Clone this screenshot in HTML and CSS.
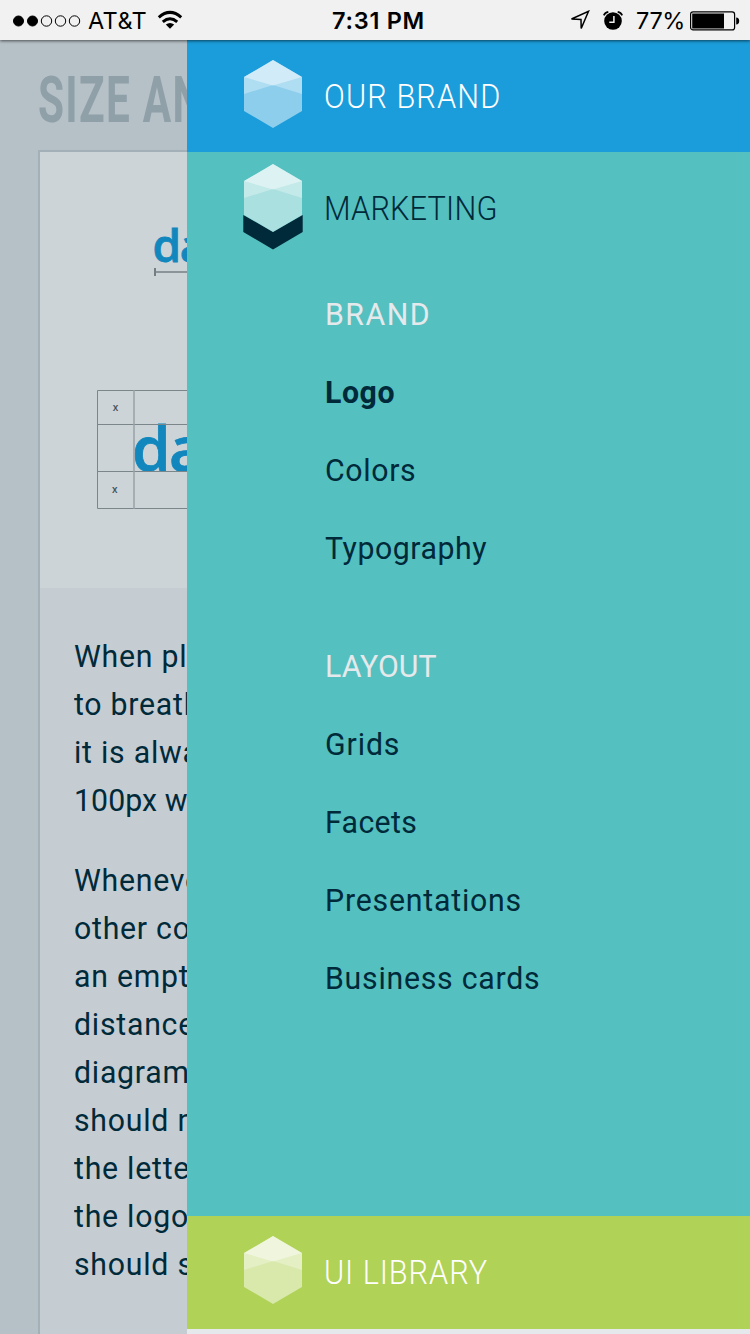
FILE: index.html
```html
<!DOCTYPE html>
<html lang="en">
<head>
<meta charset="utf-8">
<title>Logo</title>
<link rel="stylesheet" href="styles.css">
</head>
<body>
<svg width="0" height="0" class="defs" aria-hidden="true">
  <symbol id="cube" viewBox="0 0 60 86">
    <path d="M1 17 30 0l29 17v34L30 68 1 51z" fill="#fff" fill-opacity=".5"/>
    <path d="M1 17 30 0l29 17v17L30 25 1 34z" fill="#fff" fill-opacity=".3"/>
    <path d="M1 17 30 0l29 17-29 8.500z" fill="#fff" fill-opacity=".43"/>
  </symbol>
</svg>
<header class="status">
  <div class="status-left">
    <svg width="70" height="14" viewBox="0 0 70 14"><g stroke="#000" stroke-width="1"><circle cx="6.500" cy="7" r="5"/><circle cx="20.500" cy="7" r="5"/><g fill="none"><circle cx="34.500" cy="7" r="5.200"/><circle cx="48.500" cy="7" r="5.200"/><circle cx="62.500" cy="7" r="5.200"/></g></g></svg>
    <span class="carrier">AT&amp;T</span>
    <svg class="wifi" width="26" height="20" viewBox="0 0 26 20"><g fill="none" stroke="#000" stroke-width="3"><path d="M1.800 7.300Q13-2.500 24.200 7.300"/><path d="M5.800 11.800Q13 5.800 20.200 11.800"/></g><path d="M8.800 14.600Q13 11.300 17.200 14.600L13 18.800z"/></svg>
  </div>
  <div class="time">7:31 PM</div>
  <div class="status-right">
    <svg width="20" height="21" viewBox="0 0 20 21"><path d="M1.500 9 18.500 1.300 11.200 18.500 11 9.500z" fill="none" stroke="#000" stroke-width="1.500"/></svg>
    <svg class="alarm" width="20" height="19" viewBox="0 0 20 19"><circle cx="10" cy="10" r="8.800"/><path d="M.8 4.400Q2 1.500 5.300.9M19.200 4.400Q18 1.500 14.700.9" fill="none" stroke="#000" stroke-width="1.700"/><path d="M10.900 5v6.200H6.300" fill="none" stroke="#f1f1f1" stroke-width="1.500"/></svg>
    <span class="percent">77%</span>
    <svg class="battery" width="50" height="20" viewBox="0 0 50 20"><rect x=".6" y=".9" width="44" height="18" rx="2.500" fill="none" stroke="#000" stroke-width="1.200"/><path d="M2.200 2.500h31.800v15H2.200zM46.200 6.500q3 .2 3 3.500t-3 3.500z"/></svg>
  </div>
</header>
<div class="screen">
  <main class="page">
    <h1 class="title">SIZE AND</h1>
    <article class="card">
      <svg class="diagram" width="640" height="436" viewBox="40 152 640 436">
        <g fill="none" stroke="#8b9599" stroke-width="2"><path d="M155 272h300"/><path d="M155 268v8" stroke="#737e84"/></g>
        <text class="mark" x="152.500" y="262" font-size="46">datto</text>
        <text class="mark" x="132" y="471" font-size="62">datto</text>
        <g fill="none" stroke="#7b868b" stroke-width="1"><path d="M97.500 390.500h300v118h-300z"/><path d="M97 424.500h300M97 471.500h300"/><path d="M134 390v119" stroke="#98a2a6" stroke-width="1.500"/></g>
        <text class="dim" x="112.800" y="410.500">x</text>
        <text class="dim" x="112" y="493">x</text>
      </svg>
      <div class="copy">
        <p>When placing<br>to breathe,<br>it is always<br><span class="tight">100px wide</span></p>
        <p>Whenever<br>other content<br>an empty<br>distance<br>diagram<br>should not<br>the letter<br>the logo<br>should stay</p>
      </div>
    </article>
  </main>
  <nav class="drawer">
    <a class="head blue"><svg class="cube" width="60" height="86"><use href="#cube"/></svg><span class="our">OUR BRAND</span></a>
    <div class="open">
      <a class="head dark"><svg class="cube raised" width="60" height="86" viewBox="0 0 60 86"><path d="M.3 51 30 68l29.700-17v17L30 85.500.3 68z" fill="#002a3a"/><use href="#cube" width="60" height="86"/></svg><span class="marketing">MARKETING</span></a>
      <ul class="group">
        <li class="label w-brand">BRAND</li>
        <li class="current">Logo</li>
        <li class="w-colors">Colors</li>
        <li class="w-typo">Typography</li>
      </ul>
      <ul class="group">
        <li class="label w-layout">LAYOUT</li>
        <li class="w-grids">Grids</li>
        <li class="w-facets">Facets</li>
        <li class="w-pres">Presentations</li>
        <li class="w-cards">Business cards</li>
      </ul>
    </div>
    <a class="head green"><svg class="cube" width="60" height="86"><use href="#cube"/></svg><span class="library">UI LIBRARY</span></a>
  </nav>
</div>
</body>
</html>
```
FILE: styles.css
```css
* { box-sizing: border-box; }
body { margin: 0; width: 750px; height: 1334px; overflow: hidden; display: flex; flex-direction: column; font-family: Roboto, sans-serif; color: #002a3a; }
.defs { position: absolute; }
.status { height: 40px; flex: none; display: grid; grid-template-columns: 1fr auto 1fr; align-items: center; padding: 0 10px 0 12px; background: #f1f1f1; color: #000; font-family: Inter, sans-serif; font-size: 23.500px; line-height: 40px; box-shadow: 0 1px 3px rgba(0, 0, 0, .6); z-index: 1; }
.status-left, .status-right { display: flex; align-items: center; }
.status-right { justify-content: flex-end; }
.carrier { margin-left: 6px; padding-top: 1px; letter-spacing: .4px; }
.wifi { margin-left: 10px; margin-top: -1px; }
.time { font-weight: 600; letter-spacing: .7px; padding: 1px 0 0 5px; }
.alarm { margin-left: 13px; }
.percent { margin-left: 13px; padding-top: 1px; letter-spacing: -.4px; }
.battery { margin-left: 5px; }
.screen { flex: 1; display: flex; min-height: 0; }
.page { width: 187px; flex: none; overflow: hidden; background: #b6c1c7; padding-left: 38px; }
.title { margin: 0; height: 110px; padding-top: 22px; line-height: 76px; font-size: 65px; font-weight: 700; white-space: nowrap; color: #90a0a8; transform: scaleX(.65); transform-origin: 0 0; letter-spacing: 2px; }
.card { width: 680px; height: 1400px; border: 2px solid #a3b0b7; background: #c5cdd3; }
.diagram { display: block; background: #ccd4d7; }
.mark { font-family: "Open Sans", sans-serif; font-weight: 600; fill: #1187bd; stroke: #1187bd; stroke-width: .8px; letter-spacing: -1.500px; }
.dim { font-family: "Open Sans", sans-serif; font-size: 10px; font-weight: 600; fill: #465157; }
.copy { padding: 44px 34px; font-size: 32px; line-height: 48px; letter-spacing: .8px; white-space: nowrap; }
.copy p { margin: 0 0 32px; transform: scaleX(.945); transform-origin: 0 0; }
.tight { letter-spacing: .1px; }
.drawer { flex: 1; display: flex; flex-direction: column; background: #e6e9eb; }
.head { height: 112px; flex: none; display: flex; align-items: center; padding: 0 0 0 55px; gap: 21px; color: #fff; font-size: 33px; font-weight: 300; white-space: nowrap; }
.head span { transform: scaleX(.93); transform-origin: 0 50%; }
.blue { background: #1b9ddb; }
.green { background: #b0d257; height: 113px; }
.dark { color: #002a3a; }
.our { letter-spacing: 1.200px; }
.marketing { letter-spacing: .2px; }
.library { letter-spacing: 1px; }
.cube { flex: none; align-self: flex-start; margin-top: 20px; margin-left: 1px; }
.raised { margin-top: 12px; }
.open { height: 1064px; flex: none; background: #55c0c0; }
.group { list-style: none; margin: 0; padding: 11px 0 0 137.500px; font-size: 32px; line-height: 78px; white-space: nowrap; }
.group li { transform: scaleX(.945); transform-origin: 0 0; letter-spacing: .95px; }
.group + .group { padding-top: 40px; }
.label { color: #e6e9eb; }
.group .current { font-weight: 700; letter-spacing: .6px; }
.group .w-brand { letter-spacing: 1.600px; }
.group .w-colors { letter-spacing: .7px; }
.group .w-typo { letter-spacing: .6px; }
.group .w-layout { letter-spacing: .1px; }
.group .w-facets { letter-spacing: .4px; }
.group .w-pres { letter-spacing: .85px; }
.group .w-cards { letter-spacing: .8px; }
```
